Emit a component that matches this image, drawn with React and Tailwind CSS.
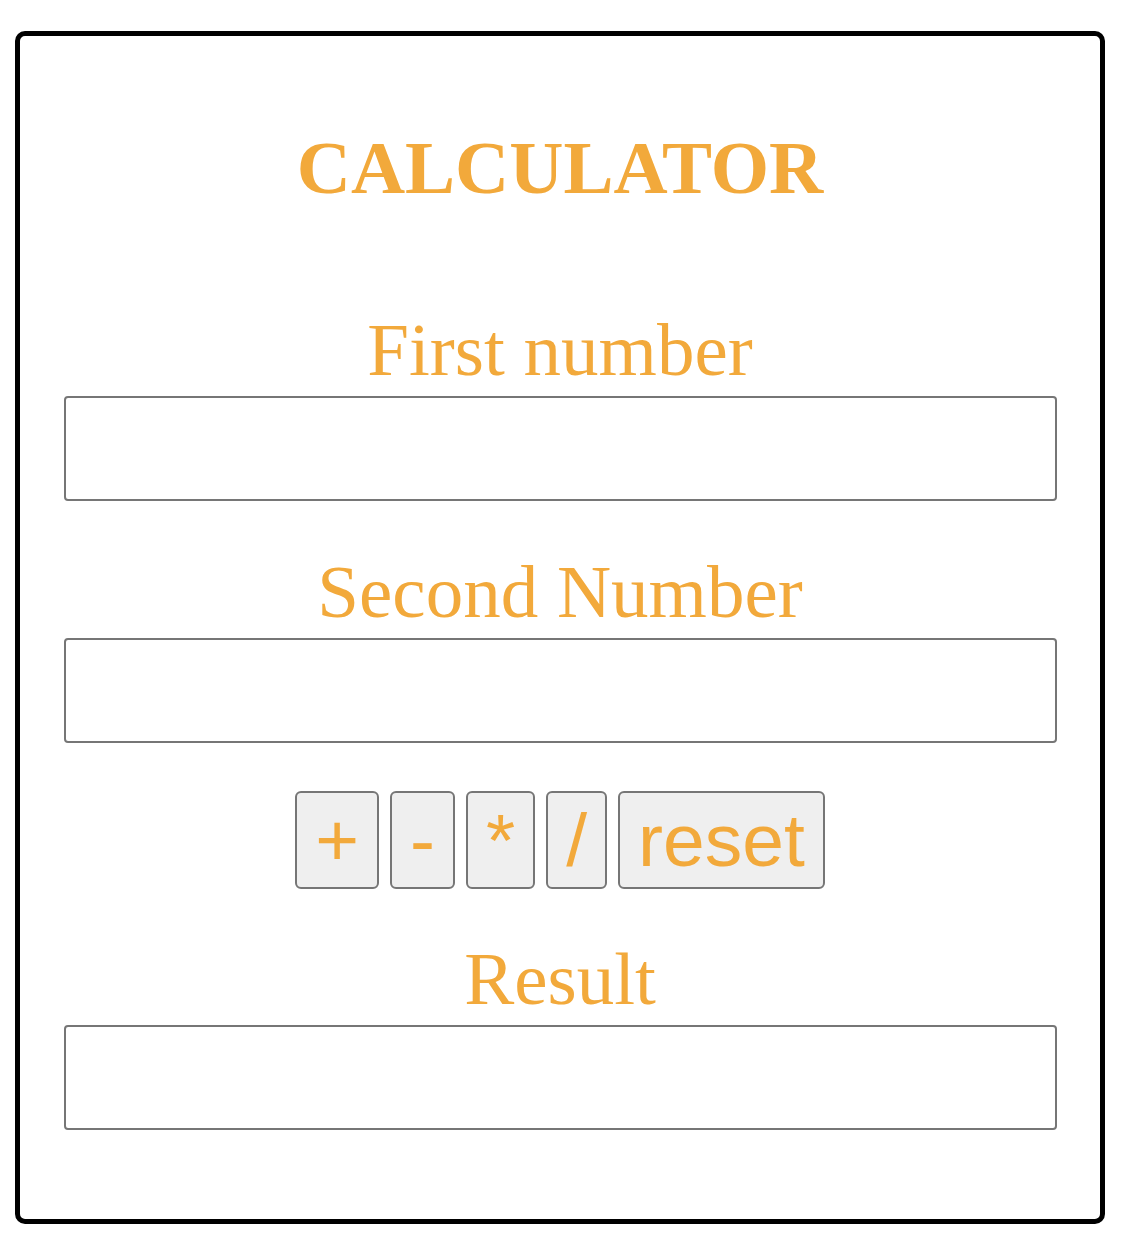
import React, { useState } from 'react';

const serif = { fontFamily: '"Liberation Serif", "Times New Roman", serif' };

const Field = ({ label, value, onChange, gap = 'mt-[54px]', readOnly }) => (
  <div className={gap}>
    <label
      className="block text-center text-[75px] leading-[74px] text-[#f2a93b]"
      style={serif}
    >
      {label}
    </label>
    <input
      type="text"
      value={value}
      onChange={onChange}
      readOnly={readOnly}
      className="block mx-auto mt-[9px] w-[993px] h-[105px] border-2 border-[#767676] rounded-[4px] bg-white px-3 text-[40px] outline-none"
    />
  </div>
);

const Btn = ({ children, onClick }) => (
  <button
    onClick={onClick}
    className="h-[98px] px-[18px] border-2 border-[#767676] rounded-[6px] bg-[#efefef] text-[75px] leading-none text-[#f2a93b]"
    style={{ fontFamily: '"Liberation Sans", Arial, sans-serif' }}
  >
    {children}
  </button>
);

export default function App() {
  const [a, setA] = useState('');
  const [b, setB] = useState('');
  const [result, setResult] = useState('');

  const calc = (op) => {
    const x = parseFloat(a);
    const y = parseFloat(b);
    if (isNaN(x) || isNaN(y)) return;
    if (op === '+') setResult(String(x + y));
    if (op === '-') setResult(String(x - y));
    if (op === '*') setResult(String(x * y));
    if (op === '/') setResult(String(x / y));
  };

  const reset = () => {
    setA('');
    setB('');
    setResult('');
  };

  return (
    <div className="bg-white min-h-screen pt-[31px] pl-[15px]">
      <div className="w-[1090px] h-[1193px] border-[5px] border-black rounded-[10px] pt-[95px]">
        <h1
          className="text-center text-[75px] leading-[74px] font-bold text-[#f2a93b]"
          style={serif}
        >
          CALCULATOR
        </h1>

        <Field label="First number" value={a} onChange={(e) => setA(e.target.value)} gap="mt-[108px]" />
        <Field label="Second Number" value={b} onChange={(e) => setB(e.target.value)} />

        <div className="flex justify-center gap-[11px] mt-[48px]">
          <Btn onClick={() => calc('+')}>+</Btn>
          <Btn onClick={() => calc('-')}>-</Btn>
          <Btn onClick={() => calc('*')}>*</Btn>
          <Btn onClick={() => calc('/')}>/</Btn>
          <Btn onClick={reset}>reset</Btn>
        </div>

        <Field label="Result" value={result} readOnly gap="mt-[53px]" />
      </div>
    </div>
  );
}
